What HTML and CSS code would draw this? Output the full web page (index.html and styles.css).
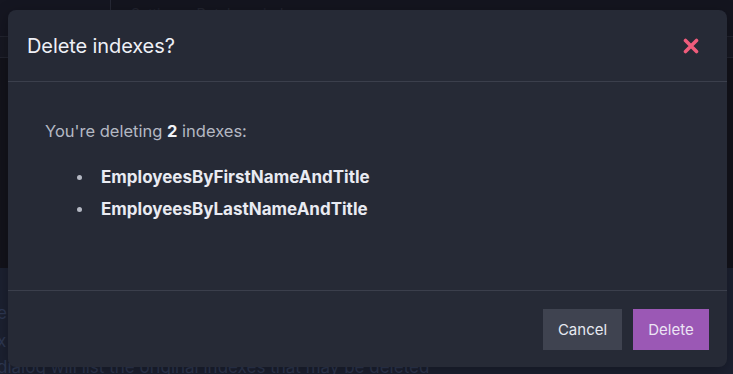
FILE: index.html
```html
<!DOCTYPE html>
<html>
<head>
<link rel="stylesheet" href="styles.css">
</head>
<body>

<div class="page">
  <div class="topbar">
    <div class="side"></div>
    <div class="crumbs">Settings &middot; Database indexes</div>
  </div>
  <div class="toolbar"></div>
  <div class="main"></div>
  <div class="panel">
    <p class="faint line1">e</p>
    <p class="faint line2">x</p>
    <p class="faint line3">dialog will list the original indexes that may be deleted</p>
  </div>
</div>

<div class="modal">
  <div class="modal-header">
    <h2 class="modal-title">Delete indexes?</h2>
    <button class="close" title="Close">
      <svg width="16" height="16" viewBox="0 0 16 16">
        <path d="M2.5 2.5 L13.5 13.5 M13.5 2.5 L2.5 13.5" stroke="#ef5c7b" stroke-width="3.6" stroke-linecap="round"/>
      </svg>
    </button>
  </div>
  <div class="modal-body">
    <p class="lead">You're deleting <strong>2</strong> indexes:</p>
    <ul class="index-list">
      <li>EmployeesByFirstNameAndTitle</li>
      <li>EmployeesByLastNameAndTitle</li>
    </ul>
  </div>
  <div class="modal-footer">
    <button class="btn btn-cancel">Cancel</button>
    <button class="btn btn-delete">Delete</button>
  </div>
</div>

</body>
</html>
```

FILE: styles.css
```css
html, body {
  margin: 0;
  height: 100%;
  overflow: hidden;
}
body {
  background: #14151f;
  font-family: Inter, "Liberation Sans", sans-serif;
  position: relative;
}

/* the page behind the dialog */
.page {
  height: 374px;
  display: flex;
  flex-direction: column;
}
.topbar {
  height: 37px;
  display: flex;
  border-bottom: 1px solid #22242f;
  box-sizing: border-box;
}
.topbar .side {
  width: 110px;
  border-right: 1px solid #262835;
  background: #151621;
}
.topbar .crumbs {
  padding: 5px 20px;
  color: #22242f;
  font-size: 14px;
}
.toolbar {
  height: 20px;
  background: #171822;
  border-bottom: 1px solid #22242f;
}
.main {
  flex: 1;
  background: #13131b;
}
.panel {
  height: 106px;
  background: #1c2131;
  position: relative;
}
.faint {
  margin: 0;
  color: #2e3852;
  font-size: 17px;
  position: absolute;
  left: -3px;
}
.line1 { top: 35px; }
.line2 { top: 63px; }
.line3 { top: 89px; }

/* dialog */
.modal {
  position: absolute;
  left: 8px;
  top: 10px;
  width: 719px;
  height: 357px;
  background: #262a36;
  border-radius: 8px;
  display: flex;
  flex-direction: column;
  box-shadow: 0 4px 16px rgba(0, 0, 0, 0.3);
}
.modal-header {
  height: 71px;
  display: flex;
  align-items: center;
  justify-content: space-between;
  padding: 0 28px 0 19px;
  border-bottom: 1px solid #3b3f4c;
}
.modal-title {
  margin: 0;
  font-size: 20px;
  font-weight: 400;
  color: #eef0f6;
  letter-spacing: -0.1px;
}
.close {
  background: none;
  border: none;
  padding: 0;
  width: 16px;
  height: 16px;
  cursor: pointer;
}
.close svg {
  display: block;
}
.modal-body {
  flex: 1;
  padding: 37px 37px 0;
}
.lead {
  margin: 0;
  font-size: 16.5px;
  line-height: 24px;
  color: #b4b8c3;
}
.lead strong {
  color: #f0f2f7;
  font-weight: 700;
}
.index-list {
  margin: 18px 0 0;
  padding-left: 32px;
  list-style: none;
}
.index-list li {
  display: flex;
  align-items: center;
  font-size: 17px;
  line-height: 32px;
  font-weight: 700;
  color: #e9ebf2;
}
.index-list li::before {
  content: "";
  width: 5px;
  height: 5px;
  border-radius: 50%;
  background: #b4b8c3;
  margin-right: 19px;
}
.modal-footer {
  display: flex;
  justify-content: flex-end;
  gap: 11px;
  padding: 18px 18px 17px;
  border-top: 1px solid #3b3f4c;
}
.btn {
  height: 41px;
  border: none;
  padding: 0 14px;
  font-family: Inter, "Liberation Sans", sans-serif;
  font-size: 15px;
  color: #e6e9f0;
  cursor: pointer;
}
.btn-cancel {
  background: #3f4350;
  width: 79px;
}
.btn-delete {
  background: #9b58b5;
  color: #ece4f4;
  width: 76px;
}
```
